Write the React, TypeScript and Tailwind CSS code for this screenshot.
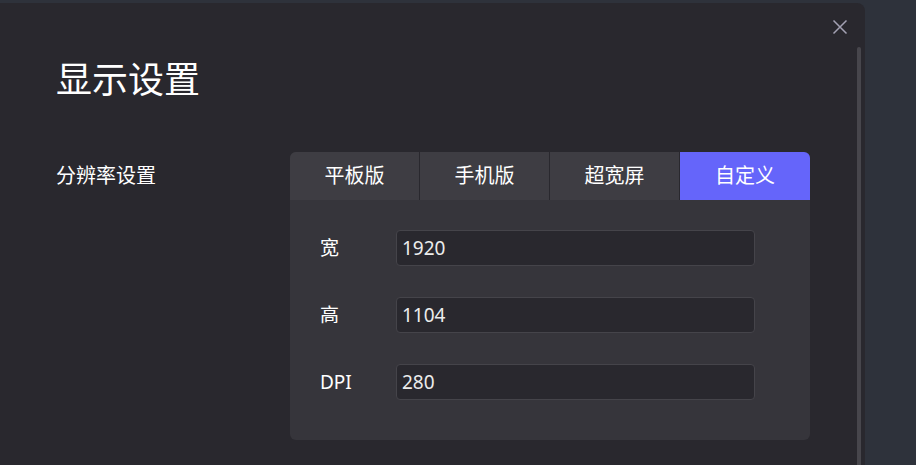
import React from "react";

const tabs = ["平板版", "手机版", "超宽屏", "自定义"];
const fields = [
  { label: "宽", value: "1920" },
  { label: "高", value: "1104" },
  { label: "DPI", value: "280" },
];

export default function App() {
  return (
    <div
      className="w-[916px] h-[465px] overflow-hidden bg-[#2e323b] pt-[3px]"
      style={{ fontFamily: '"Noto Sans", "Noto Sans CJK SC", sans-serif' }}
    >
      <div className="relative w-[865px] h-[462px] rounded-tr-[8px] bg-[#29282e] pl-[56px] pt-[53px]">
        <button className="absolute left-[832px] top-[16px] w-[16px] h-[16px] flex items-center justify-center">
          <svg width="16" height="16" viewBox="0 0 16 16" fill="none">
            <path d="M1.5 1.5L14.5 14.5M14.5 1.5L1.5 14.5" stroke="#a3a1b3" strokeWidth="1.5" />
          </svg>
        </button>
        <div className="absolute left-[857px] top-[44px] w-[4px] h-[430px] rounded-t-[2px] bg-[#47464c]" />

        <h1 className="text-[36px] leading-[48px] text-white font-normal">显示设置</h1>

        <div className="mt-[48px] flex">
          <div className="w-[234px] h-[48px] flex items-center text-[20px] text-white">分辨率设置</div>
          <div className="w-[520px] rounded-[6px] bg-[#36353b] overflow-hidden">
            <div className="flex h-[48px]">
              {tabs.map((t, i) => (
                <div
                  key={t}
                  className={
                    i === 3
                      ? "w-[130px] flex items-center justify-center bg-[#6565fa] text-white text-[20px]"
                      : "w-[130px] flex items-center justify-center bg-[#3e3d43] text-white text-[20px] border-r border-[#29282e]"
                  }
                >
                  {t}
                </div>
              ))}
            </div>
            <div className="pl-[30px] pt-[30px] pb-[40px] flex flex-col gap-[31px]">
              {fields.map((f) => (
                <div key={f.label} className="flex items-center h-[36px]">
                  <div className="w-[76px] text-[19px] text-white">{f.label}</div>
                  <div className="w-[359px] h-[36px] rounded-[4px] border border-[#45444a] bg-[#29282e] flex items-center pl-[5px] text-[19px] text-[#ececec]">
                    {f.value}
                  </div>
                </div>
              ))}
            </div>
          </div>
        </div>
      </div>
    </div>
  );
}
